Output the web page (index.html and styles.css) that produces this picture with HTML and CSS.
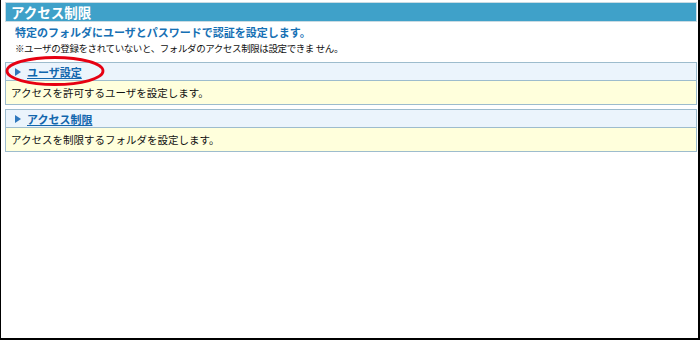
FILE: index.html
```html
<!DOCTYPE html>
<html lang="ja">
  <head>
    <meta charset="UTF-8" />
    <title>アクセス制限</title>
    <link rel="stylesheet" href="styles.css">
  </head>
  <body>
    <div class="frame">
      <div class="title-bar">アクセス制限</div>
      <p class="lead">特定のフォルダにユーザとパスワードで認証を設定します。</p>
      <p class="note">※ユーザの登録をされていないと、フォルダのアクセス制限は設定できま せん。</p>

      <div class="menu-box">
        <div class="menu-head"><span class="arrow"></span><a href="#">ユーザ設定</a></div>
        <div class="menu-body">アクセスを許可するユーザを設定します。</div>
      </div>
      <div class="menu-box">
        <div class="menu-head"><span class="arrow"></span><a href="#">アクセス制限</a></div>
        <div class="menu-body">アクセスを制限するフォルダを設定します。</div>
      </div>

      <svg class="mark" width="102" height="32" viewBox="0 0 102 32">
        <ellipse cx="50" cy="16" rx="48" ry="13.5" fill="none" stroke="#e60012" stroke-width="2.8" />
      </svg>
    </div>
  </body>
</html>
```

FILE: styles.css
```css
html, body {
  margin: 0;
  padding: 0;
  background-color: #fff;
}
.frame {
  position: relative;
  width: 700px;
  height: 340px;
  box-sizing: border-box;
  padding: 2px 1px 0 4px;
  border-left: 1px solid #000;
  border-right: 2px solid #000;
  border-bottom: 2px solid #000;
  font-family: "Noto Sans CJK JP", sans-serif;
  color: #111;
}
.title-bar {
  height: 18px;
  line-height: 18px;
  padding-left: 5px;
  background-color: #3fa1c9;
  border: 1px solid #c9dbe3;
  color: #fff;
  font-size: 13.5px;
  font-weight: bold;
}
.lead {
  margin: 2px 0 0 10px;
  line-height: 16px;
  font-size: 11px;
  font-weight: bold;
  color: #1670b4;
}
.note {
  margin: 1px 0 0 10px;
  line-height: 14px;
  font-size: 9.5px;
  letter-spacing: -0.4px;
}
.menu-box {
  margin-top: 7px;
  border: 1px solid #9dbccd;
}
.menu-box + .menu-box {
  margin-top: 4px;
}
.menu-head {
  display: flex;
  align-items: center;
  height: 17px;
  padding-left: 9px;
  background-color: #ebf4fc;
  border-bottom: 1px solid #9dbccd;
}
.arrow {
  width: 0;
  height: 0;
  margin-right: 6px;
  border-top: 4px solid transparent;
  border-bottom: 4px solid transparent;
  border-left: 6px solid #2f78bd;
}
.menu-head a {
  font-size: 11px;
  font-weight: bold;
  color: #1166ad;
  text-decoration: underline;
}
.menu-body {
  height: 23px;
  line-height: 23px;
  padding-left: 5px;
  background-color: #ffffdc;
  font-size: 10.5px;
}
.mark {
  position: absolute;
  left: 4px;
  top: 55px;
}
```
